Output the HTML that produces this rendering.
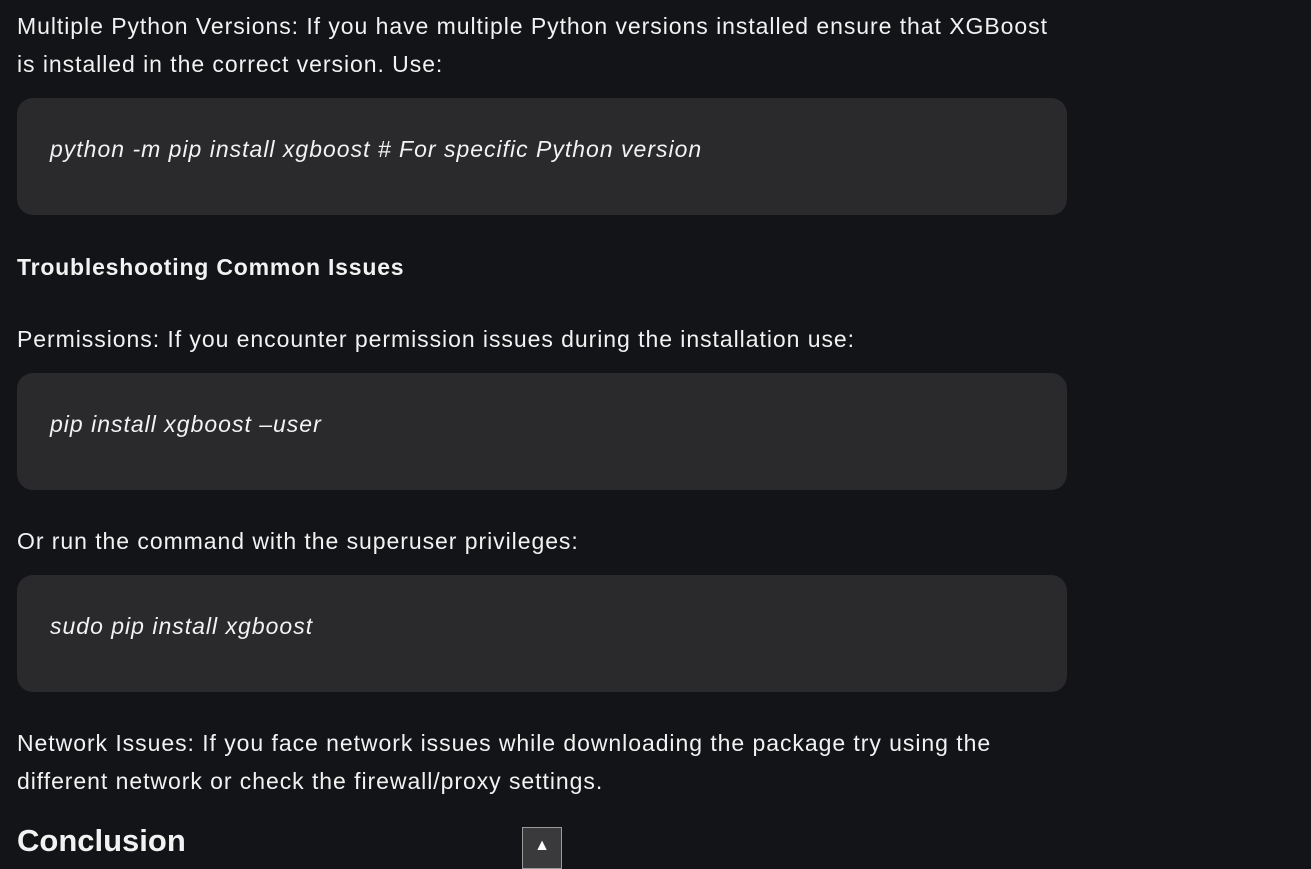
<!DOCTYPE html>
<html><head><meta charset="utf-8"><style>
html,body{margin:0;padding:0;background:#131417;width:1311px;height:862px;overflow:hidden;font-family:"Liberation Sans",sans-serif;color:#f2f2f2}
.t{position:absolute;left:17px;font-size:23px;letter-spacing:0.95px;white-space:nowrap;line-height:38px}
.box{position:absolute;left:17px;width:1050px;height:117px;background:#2a2a2d;border-radius:16px}
.code{position:absolute;left:50px;font-style:italic;font-size:23px;letter-spacing:1px;white-space:nowrap;line-height:30px}
</style></head><body>
<div class="t" style="top:7px">Multiple Python Versions: If you have multiple Python versions installed ensure that XGBoost</div>
<div class="t" style="top:45px">is installed in the correct version. Use:</div>
<div class="box" style="top:98px"></div>
<div class="code" style="top:134px">python -m pip install xgboost # For specific Python version</div>
<div class="t" style="top:248px;font-weight:bold;letter-spacing:0.8px">Troubleshooting Common Issues</div>
<div class="t" style="top:320px">Permissions: If you encounter permission issues during the installation use:</div>
<div class="box" style="top:373px"></div>
<div class="code" style="top:409px">pip install xgboost –user</div>
<div class="t" style="top:522px">Or run the command with the superuser privileges:</div>
<div class="box" style="top:575px"></div>
<div class="code" style="top:611px">sudo pip install xgboost</div>
<div class="t" style="top:724px">Network Issues: If you face network issues while downloading the package try using the</div>
<div class="t" style="top:762px">different network or check the firewall/proxy settings.</div>
<div class="t" style="top:821px;font-size:31px;letter-spacing:0;font-weight:bold;line-height:40px">Conclusion</div>
<div style="position:absolute;left:522px;top:827px;width:38px;height:40px;background:#3a3a3c;border:1px solid #9a9a9a;color:#fff;font-size:16px;text-align:center;line-height:36px">▲</div>
</body></html>
